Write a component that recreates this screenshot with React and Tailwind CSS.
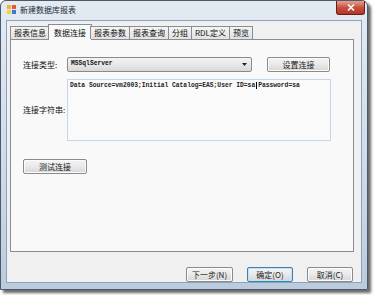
import React from 'react';

const cjk = { fontFamily: '"Noto Sans CJK SC", "Liberation Sans", sans-serif' };
const mono = { fontFamily: '"Liberation Mono", "Noto Sans CJK SC", monospace' };

const tabs = ['报表信息', '数据连接', '报表参数', '报表查询', '分组', 'RDL定义', '预览'];

function AppIcon() {
  return (
    <svg width="9" height="9" viewBox="0 0 9 9" className="shrink-0">
      <rect x="0" y="0" width="4" height="4" fill="#f5b52a" />
      <rect x="5" y="0" width="4" height="4" fill="#e8552f" />
      <rect x="0" y="5" width="4" height="4" fill="#f7d04a" />
      <rect x="5" y="5" width="4" height="4" fill="#3b79c9" />
    </svg>
  );
}

function WinButton({ label, width, isDefault = false }) {
  return (
    <div
      className={`h-[15px] rounded-[2px] border flex items-center justify-center text-[8px] leading-none text-[#1a1a1a] bg-gradient-to-b from-[#f4f4f4] via-[#e9e9e9] to-[#d6d6d6] ${
        isDefault
          ? 'border-[#3c7fb1] shadow-[inset_0_0_0_1px_#bfe3f7]'
          : 'border-[#8a8a8a] shadow-[inset_0_0_0_1px_#fcfcfc]'
      }`}
      style={{ ...cjk, width }}
    >
      {label}
    </div>
  );
}

export default function App() {
  const active = 1;
  return (
    <div className="w-[375px] h-[295px] bg-white overflow-hidden">
      <div className="w-[368px] h-[290px] rounded-t-[6px] border border-[#4a596d] bg-gradient-to-b from-[#e3eaf2] via-[#d2dde9] to-[#bccbdc] shadow-[3px_3px_3px_rgba(0,0,0,0.6)] flex flex-col">
        {/* Title bar */}
        <div className="h-[19px] flex items-start shrink-0">
          <div className="flex items-center gap-[4px] pl-[6px] pt-[4px]">
            <AppIcon />
            <span className="text-[8px] leading-none text-[#1e2a38]" style={cjk}>
              新建数据库报表
            </span>
          </div>
          <div className="ml-auto mr-[2px] w-[29px] h-[14px] rounded-b-[3px] border border-t-0 border-[#6e1d16] bg-gradient-to-b from-[#e6a08f] via-[#c9503f] to-[#b0362a] flex items-center justify-center">
            <svg width="8" height="7" viewBox="0 0 8 7">
              <path d="M1 0.5 L7 6.5 M7 0.5 L1 6.5" stroke="#ffffff" strokeWidth="1.6" />
            </svg>
          </div>
        </div>

        {/* Client area */}
        <div className="flex-1 mx-[5px] mb-[6px] bg-[#f0f0f0] border border-[#8da2bb] flex flex-col pl-[3px] pr-[7px] pt-[2px]">
          {/* Tabs */}
          <div className="flex items-end h-[16px] relative z-10">
            {tabs.map((t, i) =>
              i === active ? (
                <div
                  key={t}
                  className="h-[16px] -mb-[1px] -mx-[2px] px-[5px] bg-[#f9f9f9] border border-b-0 border-[#898c95] flex items-center text-[8px] leading-none text-[#111]"
                  style={cjk}
                >
                  {t}
                </div>
              ) : (
                <div
                  key={t}
                  className={`h-[13px] px-[3px] bg-gradient-to-b from-[#f5f5f5] to-[#e1e1e1] border border-b-0 border-[#898c95] flex items-center text-[8px] leading-none text-[#111] ${
                    i > 0 && i !== active + 1 ? '-ml-[1px]' : ''
                  }`}
                  style={cjk}
                >
                  {t}
                </div>
              )
            )}
          </div>

          {/* Tab panel */}
          <div className="h-[213px] bg-[#f9f9f9] border border-[#898c95] pt-[17px] pl-[12px]">
            <div className="flex items-center h-[15px]">
              <span className="w-[44px] text-[8px] leading-none text-[#111]" style={cjk}>
                连接类型:
              </span>
              <div className="w-[185px] h-[15px] rounded-[2px] border border-[#8a8a8a] bg-gradient-to-b from-[#f3f3f3] via-[#e8e8e8] to-[#d8d8d8] flex items-center pl-[3px] pr-[4px]">
                <span className="text-[6.3px] font-bold leading-none text-[#111]" style={mono}>
                  MSSqlServer
                </span>
                <svg width="5" height="3" viewBox="0 0 5 3" className="ml-auto">
                  <path d="M0 0 H5 L2.5 3 Z" fill="#222" />
                </svg>
              </div>
              <div className="ml-[15px]">
                <WinButton label="设置连接" width={63} />
              </div>
            </div>

            <div className="flex items-center mt-[7px]">
              <span className="w-[44px] text-[8px] leading-none text-[#111]" style={cjk}>
                连接字符串:
              </span>
              <div
                className="w-[264px] h-[62px] bg-[#fafafa] border border-[#c3d6ea] px-[2px] pt-[2px] text-[6.3px] leading-[8px] font-bold text-[#222] whitespace-nowrap"
                style={mono}
              >
                Data Source=vm2003;Initial Catalog=EAS;User ID=sa
                <span className="inline-block w-[1px] h-[7px] bg-black align-middle mx-[1px]" />
                Password=sa
              </div>
            </div>

            <div className="mt-[18px]">
              <WinButton label="测试连接" width={64} />
            </div>
          </div>

          {/* Bottom buttons */}
          <div className="flex justify-end gap-[14px] mt-[15px] pr-[1px]">
            <WinButton label="下一步(N)" width={47} />
            <WinButton label="确定(O)" width={46} isDefault />
            <WinButton label="取消(C)" width={46} />
          </div>
        </div>
      </div>
    </div>
  );
}
